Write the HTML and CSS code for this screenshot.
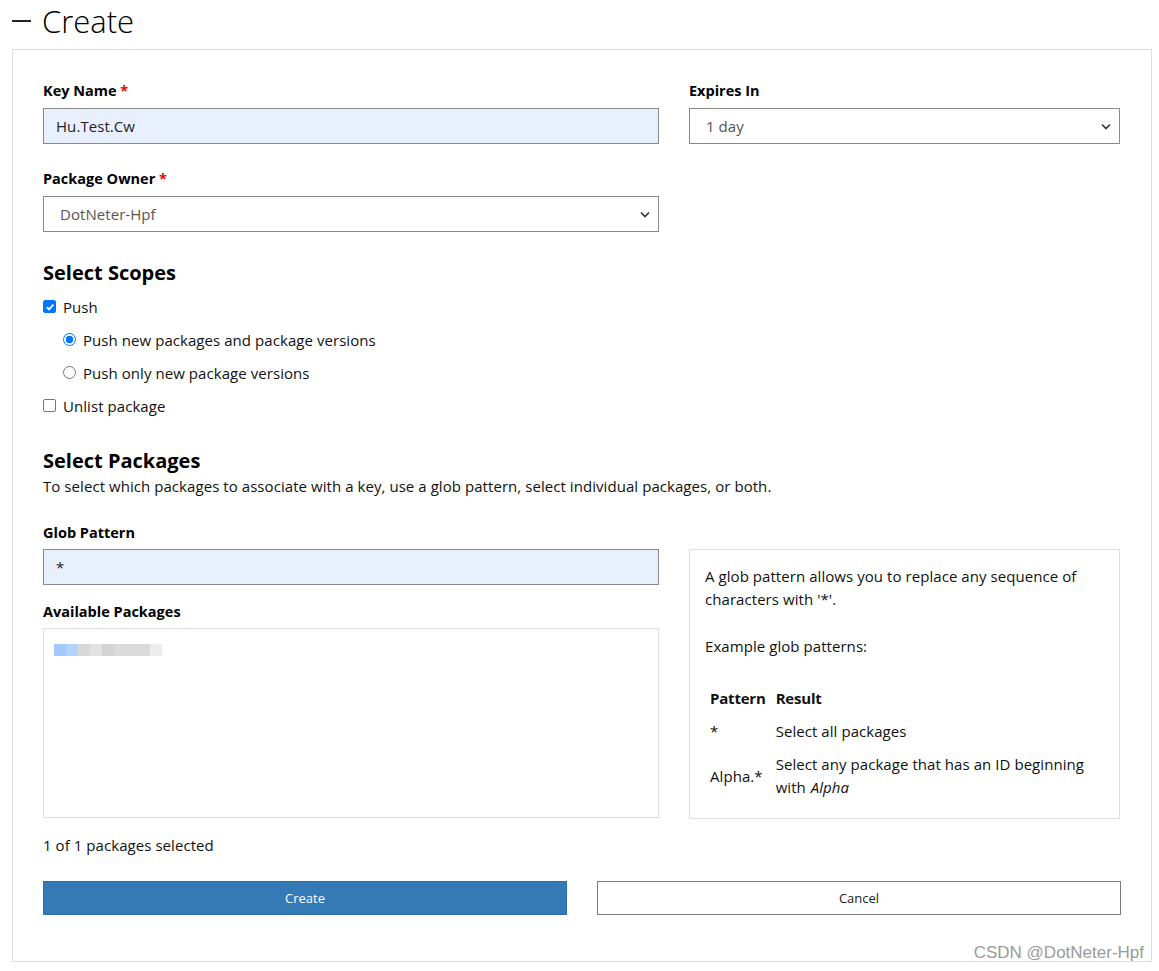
FILE: index.html
```html
<!DOCTYPE html>
<html>
<head>
<meta charset="utf-8">
<link rel="stylesheet" href="styles.css">
</head>
<body>
<div class="page">
  <h1 class="title"><span class="dash"></span>Create</h1>
  <div class="panel">
    <div class="row">
      <div class="col-left">
        <div class="field">
          <label class="lbl">Key Name <span class="req">*</span></label>
          <div class="input autofill">Hu.Test.Cw</div>
        </div>
        <div class="field">
          <label class="lbl">Package Owner <span class="req">*</span></label>
          <div class="select"><span>DotNeter-Hpf</span><svg class="chev" width="10" height="7" viewBox="0 0 10 7"><path d="M1 1.5 L5 5.5 L9 1.5" fill="none" stroke="#333" stroke-width="1.6"/></svg></div>
        </div>
      </div>
      <div class="col-right">
        <div class="field">
          <label class="lbl">Expires In</label>
          <div class="select"><span>1 day</span><svg class="chev" width="10" height="7" viewBox="0 0 10 7"><path d="M1 1.5 L5 5.5 L9 1.5" fill="none" stroke="#333" stroke-width="1.6"/></svg></div>
        </div>
      </div>
    </div>

    <h2 class="sec">Select Scopes</h2>
    <div class="opts">
      <div class="opt"><span class="cb checked"><svg width="10" height="10" viewBox="0 0 10 10"><path d="M1.8 5.2 L4 7.4 L8.4 2.6" fill="none" stroke="#fff" stroke-width="1.8"/></svg></span>Push</div>
      <div class="opt sub"><span class="rb checked"></span>Push new packages and package versions</div>
      <div class="opt sub"><span class="rb"></span>Push only new package versions</div>
      <div class="opt"><span class="cb"></span>Unlist package</div>
    </div>

    <h2 class="sec sec2">Select Packages</h2>
    <p class="desc">To select which packages to associate with a key, use a glob pattern, select individual packages, or both.</p>

    <div class="row pk">
      <div class="col-left">
        <label class="lbl lbl1">Glob Pattern</label>
        <div class="input autofill">*</div>
        <label class="lbl lbl2">Available Packages</label>
        <div class="listbox"><div class="blur"></div></div>
      </div>
      <div class="col-right">
        <div class="help">
          <p>A glob pattern allows you to replace any sequence of characters with '*'.</p>
          <p class="ex">Example glob patterns:</p>
          <table class="tbl">
            <tr><th>Pattern</th><th>Result</th></tr>
            <tr><td>*</td><td>Select all packages</td></tr>
            <tr><td>Alpha.*</td><td>Select any package that has an ID beginning with <i>Alpha</i></td></tr>
          </table>
        </div>
      </div>
    </div>

    <p class="count">1 of 1 packages selected</p>

    <div class="btns">
      <button class="btn primary">Create</button>
      <button class="btn">Cancel</button>
    </div>
  </div>
  <div class="wm">CSDN @DotNeter-Hpf</div>
</div>
</body>
</html>
```

FILE: styles.css
```css
* { box-sizing: border-box; }
html, body { margin: 0; padding: 0; background: #fff; }
body {
  font-family: "Segoe UI", "Open Sans", "Noto Sans", sans-serif;
  font-size: 15px;
  letter-spacing: 0.06px;
  color: #000;
}
.page { position: relative; width: 1159px; height: 971px; overflow: hidden; }
.title {
  margin: 0;
  height: 49px;
  padding-left: 12px;
  font-weight: 300;
  font-size: 31px;
  line-height: 42px;
  letter-spacing: 0;
  display: flex;
  align-items: flex-start;
  color: #000;
}
.dash {
  display: inline-block;
  width: 19px;
  height: 1.5px;
  background: #222;
  margin-top: 20px;
  margin-right: 11px;
}
.panel {
  margin-left: 12px;
  width: 1140px;
  height: 913px;
  border: 1px solid #ddd;
  padding: 31px 30px 0 30px;
}
.row { display: flex; gap: 30px; }
.col-left { width: 616px; }
.col-right { width: 431px; }
.field { margin-bottom: 25px; }
.lbl {
  display: block;
  font-weight: 700;
  font-size: 14.5px;
  line-height: 20px;
  margin-bottom: 7px;
  letter-spacing: 0;
}
.req { color: #e00; }
.input {
  height: 36px;
  border: 1px solid #8a8a8a;
  padding: 0 12px;
  line-height: 34px;
  font-size: 15px;
  color: #222;
}
.autofill { background: #e8f0fe; }
.select {
  height: 36px;
  border: 1px solid #8a8a8a;
  padding: 0 8px 0 16px;
  display: flex;
  align-items: center;
  justify-content: space-between;
  font-size: 15px;
  color: #555;
  background: #fff;
}
.sec {
  margin: 2px 0 3px;
  font-size: 20px;
  font-weight: 700;
  line-height: 28px;
  letter-spacing: 0;
}
.opts { display: flex; flex-direction: column; }
.opt {
  height: 33px;
  display: flex;
  align-items: center;
  font-size: 15px;
  color: #111;
}
.opt.sub { padding-left: 20px; }
.cb {
  width: 13px; height: 13px;
  border: 1px solid #767676;
  border-radius: 2px;
  margin-right: 7px;
  display: inline-flex; align-items: center; justify-content: center;
  background: #fff;
}
.cb.checked { background: #0075ff; border-color: #0075ff; }
.rb {
  width: 13px; height: 13px;
  border: 1px solid #767676;
  border-radius: 50%;
  margin-right: 7px;
  background: #fff;
}
.rb.checked { border: 1.5px solid #0075ff; background: radial-gradient(circle, #0075ff 0 3.5px, #fff 4px); }
.sec2 { margin-top: 25px; margin-bottom: 0; }
.desc { margin: 1px 0 0; font-size: 15px; line-height: 20px; color: #111; }
.pk { margin-top: 27px; align-items: flex-start; }
.pk .col-right { padding-top: 26px; }
.lbl1 { margin-bottom: 6px; }
.lbl2 { margin-top: 17px; margin-bottom: 6px; }
.listbox {
  height: 190px;
  border: 1px solid #ddd;
  padding: 15px 10px;
}
.blur {
  width: 108px; height: 12px;
  background: linear-gradient(90deg, #a0c8ff 0 12px, #b0d4ff 12px 24px, #d8d8d8 24px 36px, #e2e2e2 36px 48px, #d4d4d4 48px 60px, #dadada 60px 96px, #ececec 96px 108px);
  filter: blur(0.4px);
}
.help {
  height: 270px;
  border: 1px solid #ddd;
  padding: 15px 15px;
  font-size: 15px;
  line-height: 23px;
  color: #111;
}
.help p { margin: 0; }
.help .ex { margin-top: 24px; }
.tbl { border-collapse: collapse; margin-top: 24px; }
.tbl th, .tbl td { text-align: left; padding: 5px 5px; vertical-align: middle; line-height: 23px; }
.tbl th { font-weight: 700; letter-spacing: -0.2px; }
.tbl td i { padding-left: 1px; }
.count { margin: 16px 0 0; font-size: 15px; line-height: 20px; color: #111; }
.btns { display: flex; gap: 30px; margin-top: 26px; }
.btn {
  flex: 1;
  height: 34px;
  border: 1px solid #7a7a7a;
  background: #fff;
  font-family: inherit;
  font-size: 13px;
  color: #222;
  padding: 0;
}
.btn.primary { background: #337ab7; border-color: #2e6da4; color: #fff; }
.wm {
  position: absolute;
  right: 15px;
  bottom: 8px;
  font-family: "Liberation Sans", Arial, sans-serif;
  font-size: 17px;
  letter-spacing: 0;
  color: #9a9a9a;
}
```
